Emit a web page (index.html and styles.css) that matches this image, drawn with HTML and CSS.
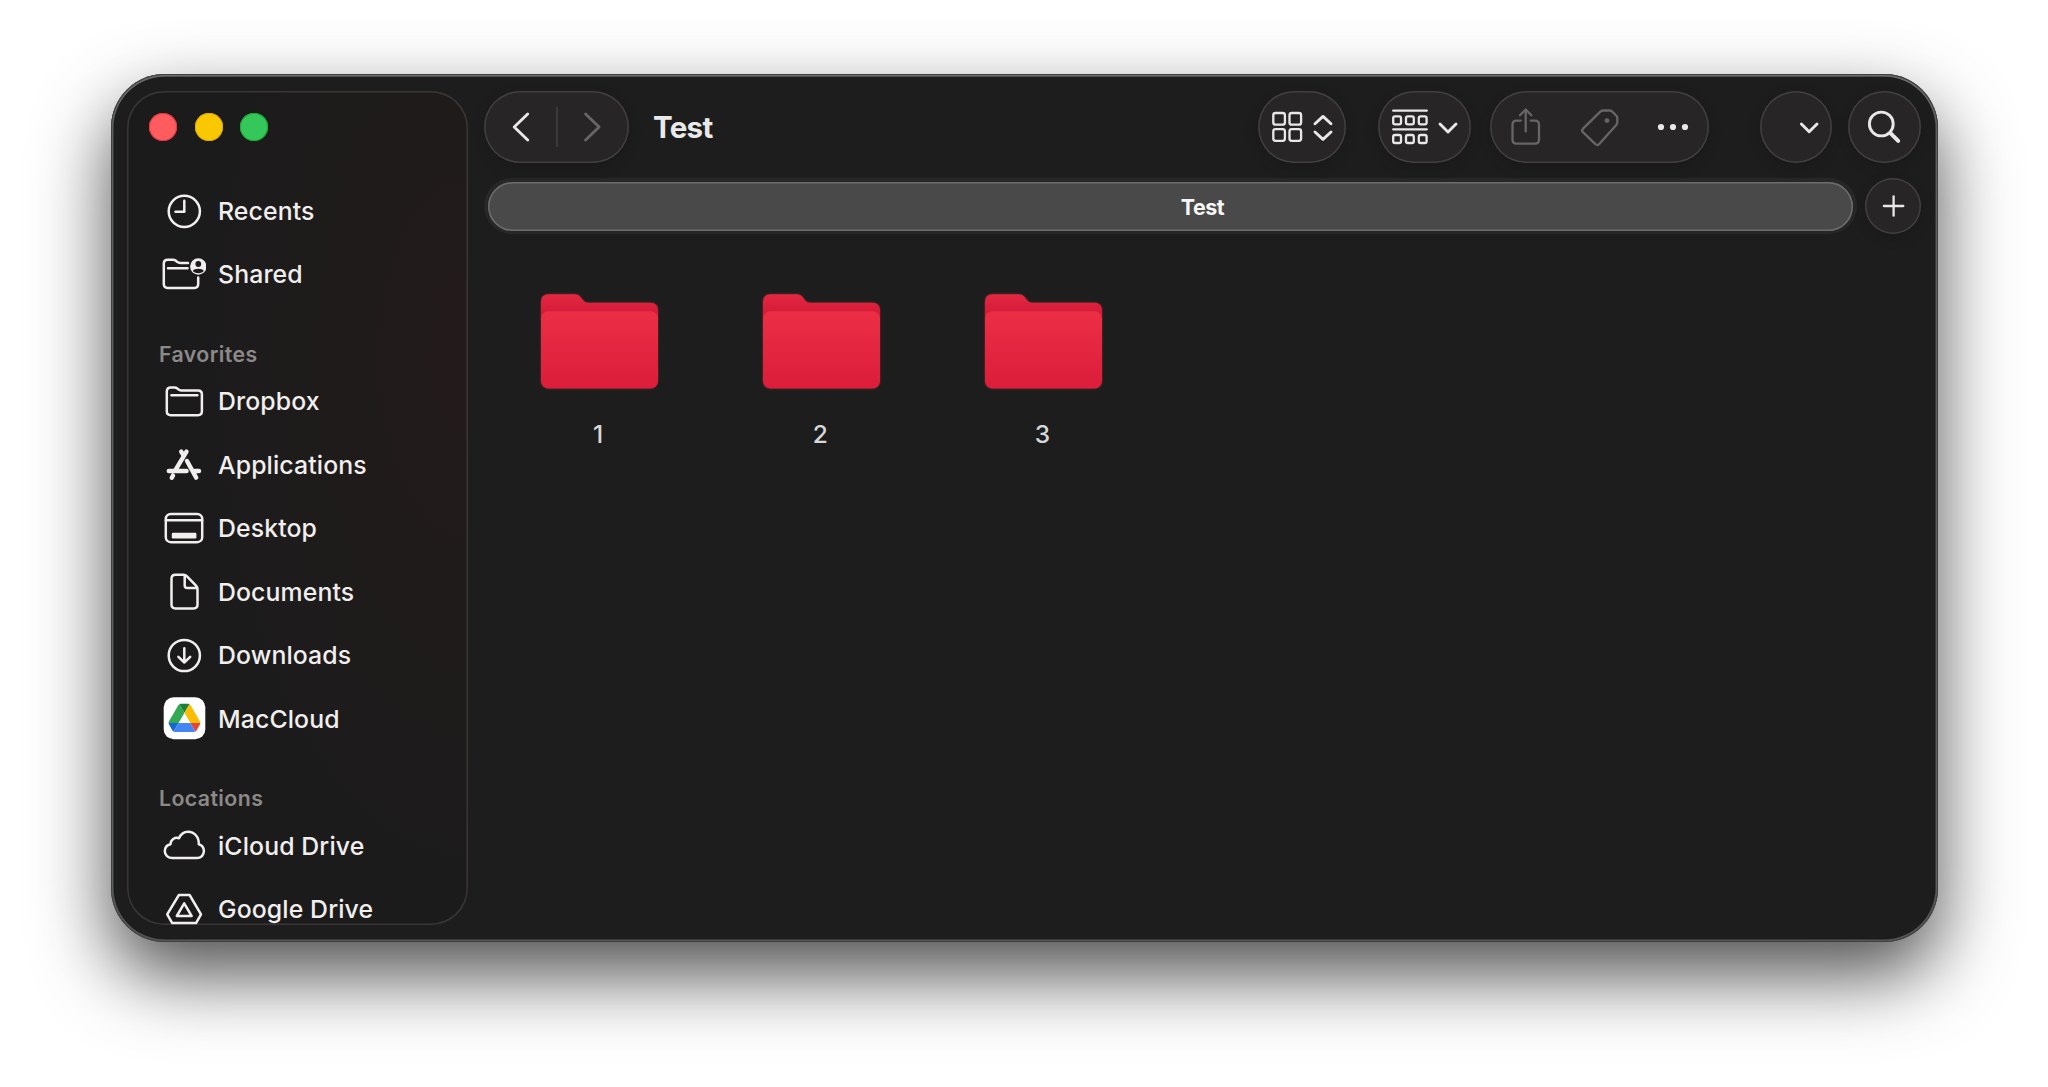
FILE: index.html
```html
<!DOCTYPE html>
<html lang="en">
<head>
<meta charset="utf-8">
<title>Test</title>
<link rel="stylesheet" href="styles.css">
</head>
<body>
<div class="window">
  <aside class="sidebar">
    <div class="lights"><span class="light close"></span><span class="light minimize"></span><span class="light zoom"></span></div>
    <nav class="list">
      <a class="row"><svg class="icon" viewBox="0 0 44 44"><circle cx="22.3" cy="22.3" r="15.6"/><path d="M22.3 11.7V22.7H13.5"/></svg><span>Recents</span></a>
      <a class="row"><svg class="icon" viewBox="0 0 44 44"><path d="M26 10.9H18.5C17 10.9 16.2 10.6 15 9.7L13.6 8.6C12.8 8 12 7.7 11 7.7H5.6Q1.8 7.7 1.8 11.5V32Q1.8 35.9 5.7 35.9H32.4Q36.2 35.9 36.2 32V25.5M6 16.2H25.6"/><circle class="solid" cx="36.3" cy="14.5" r="8.2"/><circle class="cut" cx="36.3" cy="12" r="2.9"/><path class="cut" d="M30.8 19C32 15.9 40.6 15.9 41.8 19C39 22 33.6 22 30.8 19Z"/></svg><span>Shared</span></a>
      <h2 class="heading">Favorites</h2>
      <a class="row"><svg class="icon" viewBox="0 0 44 44"><path d="M8.8 8.4H12.4C13.6 8.4 14.4 8.7 15.3 9.5L16.4 10.4C17.2 11.1 18 11.4 19.2 11.4H36Q39.9 11.4 39.9 15.2V32.3Q39.9 36.2 36 36.2H8.7Q4.8 36.2 4.8 32.3V12.3Q4.8 8.4 8.8 8.4ZM9.4 16.2H35.4"/></svg><span>Dropbox</span></a>
      <a class="row"><svg class="icon" viewBox="0 0 44 44"><path class="thick" d="M24.5 8.6L13.4 27.2M6.8 28H24.6M25 18L34.2 34.6M19.2 8.6L21.8 13M11 32.6L9.8 34.8M32.5 28H37"/></svg><span>Applications</span></a>
      <a class="row"><svg class="icon" viewBox="0 0 44 44"><rect x="3.8" y="8" width="36.4" height="28.2" rx="5"/><path d="M4 14.2H40"/><rect class="solid" x="9.8" y="26.8" width="24.6" height="5.6" rx="1.2"/></svg><span>Desktop</span></a>
      <a class="row"><svg class="icon" viewBox="0 0 44 44"><path d="M13.5 4.8H21.5Q23.6 4.8 25 6.3L34 15.6Q35.5 17.2 35.5 19.2V34.5Q35.5 38.4 31.6 38.4H13.4Q9.5 38.4 9.5 34.5V8.7Q9.5 4.8 13.5 4.8ZM22.7 5.2V15.4Q22.7 17.9 25.2 17.9H35"/></svg><span>Documents</span></a>
      <a class="row"><svg class="icon" viewBox="0 0 44 44"><circle cx="22.3" cy="22.5" r="15.6"/><path d="M22.3 15.2V29.4M16.4 23.9L22.3 29.5L28.2 23.9"/></svg><span>Downloads</span></a>
      <a class="row"><svg class="icon" viewBox="0 0 44 44"><rect x="1.7" y="0.2" width="41.6" height="42" rx="10" fill="#fff" stroke="none"/><g class="drive" transform="translate(6.6 6.7) scale(.363)"><path d="m6.6 66.85 3.85 6.65c.8 1.4 1.95 2.5 3.3 3.3l13.75-23.8h-27.5c0 1.55.4 3.1 1.2 4.5z" fill="#1967d2"/><path d="m43.65 25-13.75-23.8c-1.35.8-2.5 1.9-3.3 3.3l-25.4 44a9.06 9.06 0 0 0 -1.2 4.5h27.5z" fill="#34a853"/><path d="m73.55 76.8c1.35-.8 2.5-1.9 3.3-3.3l9.25-16c.8-1.4 1.2-2.95 1.2-4.5h-27.5z" fill="#ea4335"/><path d="m43.65 25 13.75-23.8c-1.35-.8-2.9-1.2-4.5-1.2h-18.5c-1.6 0-3.15.45-4.5 1.2z" fill="#188038"/><path d="m59.8 53h-32.3l-13.75 23.8c1.35.8 2.9 1.2 4.5 1.2h50.8c1.6 0 3.15-.45 4.5-1.2z" fill="#4285f4"/><path d="m73.4 26.5-12.7-22c-.8-1.4-1.95-2.5-3.3-3.3l-13.75 23.8 16.15 28h27.45c0-1.55-.4-3.1-1.2-4.5z" fill="#fbbc04"/></g></svg><span>MacCloud</span></a>
      <h2 class="heading">Locations</h2>
      <a class="row"><svg class="icon" viewBox="0 0 44 44"><path d="M10.5 34.1C6 34.1 2.8 31 2.8 27.2C2.8 23.7 5.2 21 8.5 20.2C8.7 15.6 12.8 12.9 17 14.2C18.8 10.3 22 7.8 26 7.8C32.4 7.8 37 13 36.8 20.2C40 21.2 41.9 23.8 41.9 27.1C41.9 31 39 34.1 35 34.1Z"/></svg><span>iCloud Drive</span></a>
      <a class="row"><svg class="icon" viewBox="0 0 44 44"><path d="M16.9 8H27.6L39 27.3L34.2 35.9H10.1L5.2 27.3ZM22.2 16.4L14.8 29H29.6Z"/></svg><span>Google Drive</span></a>
    </nav>
  </aside>
  <main class="main">
    <header class="toolbar">
      <div class="pill nav"><svg viewBox="0 0 145 72"><path d="M43.7 23L30.2 36L43.7 49"/><path class="rule" d="M73 16V56"/><path class="dim" d="M101.6 23L115.1 36L101.6 49"/></svg></div>
      <h1 class="title">Test</h1>
      <div class="pill view"><svg viewBox="0 0 88 72"><g class="thin"><rect x="15.3" y="22" width="11.6" height="11.6" rx="2.2"/><rect x="31.5" y="22" width="11.6" height="11.6" rx="2.2"/><rect x="15.3" y="38.2" width="11.6" height="11.6" rx="2.2"/><rect x="31.5" y="38.2" width="11.6" height="11.6" rx="2.2"/></g><path d="M57 32.8L65 25.4L73 32.8M57 41L65 48.4L73 41"/></svg></div>
      <div class="pill group"><svg viewBox="0 0 93 72"><g class="thin"><path d="M15.2 19.7H48.8M15.2 38.3H48.8"/><rect x="15.2" y="25.3" width="7.8" height="8" rx="1.8"/><rect x="28" y="25.3" width="7.8" height="8" rx="1.8"/><rect x="40.8" y="25.3" width="7.8" height="8" rx="1.8"/><rect x="15.2" y="44" width="7.8" height="8" rx="1.8"/><rect x="28" y="44" width="7.8" height="8" rx="1.8"/><rect x="40.8" y="44" width="7.8" height="8" rx="1.8"/></g><path d="M62 33L70 41L78 33"/></svg></div>
      <div class="pill actions"><svg viewBox="0 0 219 72"><g class="thin dim"><path d="M30.8 29.6H26.6Q22.5 29.6 22.5 33.7V48.6Q22.5 52.7 26.6 52.7H44.9Q49 52.7 49 48.6V33.7Q49 29.6 44.9 29.6H40.6M35.7 40.4V18.6M30 24.2L35.7 18.5L41.4 24.2"/><path d="M110.6 20.4Q111.6 19.5 113 19.5H119.6Q121 19.5 122 20.4L126.4 24.7Q127.3 25.7 127.3 27V31.6Q127.3 33 126.3 34L109 53.2Q107.4 55 105.7 53.3L92.9 41.2Q91.3 39.6 92.8 37.9Z"/><circle class="dot" cx="117" cy="29.6" r="2.4"/></g><circle class="dot" cx="171" cy="36" r="3.1"/><circle class="dot" cx="183" cy="36" r="3.1"/><circle class="dot" cx="195" cy="36" r="3.1"/></svg></div>
      <div class="pill more"><svg viewBox="0 0 72 72"><path d="M41.4 33L49.2 40.8L57 33"/></svg></div>
      <div class="pill search"><svg viewBox="0 0 73 72"><circle cx="33.3" cy="33" r="11.9"/><path class="handle" d="M42.4 42.1L50.2 49.9"/></svg></div>
    </header>
    <div class="tabs">
      <div class="tabbar"><div class="tab">Test</div></div>
      <div class="pill plus"><svg viewBox="0 0 56 56"><path class="thin" d="M28.6 18.3V37.7M18.9 28H38.3"/></svg></div>
    </div>
    <svg class="defs" width="0" height="0">
      <defs>
        <linearGradient id="back" x1="0" y1="0" x2="0" y2="1"><stop offset="0" stop-color="#e32841"/><stop offset=".42" stop-color="#d61c39"/><stop offset="1" stop-color="#d61c39"/></linearGradient>
        <linearGradient id="front" x1="0" y1="0" x2="0" y2="1"><stop offset="0" stop-color="#ec2e45"/><stop offset="1" stop-color="#dc1d3b"/></linearGradient>
        <symbol id="folder" viewBox="0 0 117 95"><path fill="url(#back)" d="M7.5 .3H33.5C37 .3 38.6 1.6 40.5 4.2C42.6 7.2 44.4 8.8 47.8 8.8H109.5Q117 8.8 117 16.3V40H0V7.8Q0 .3 7.5 .3Z"/><rect fill="url(#front)" y="17.2" width="117" height="77.3" rx="7.5"/></symbol>
      </defs>
    </svg>
    <section class="files">
      <figure class="file"><svg class="folder"><use href="#folder"/></svg><figcaption>1</figcaption></figure>
      <figure class="file"><svg class="folder"><use href="#folder"/></svg><figcaption>2</figcaption></figure>
      <figure class="file"><svg class="folder"><use href="#folder"/></svg><figcaption>3</figcaption></figure>
    </section>
  </main>
</div>
</body>
</html>
```
FILE: styles.css
```css
* { box-sizing: border-box; }
html, body { margin: 0; height: 100%; }
body {
  background: #fff;
  padding: 74px 110px 145px 111px;
  font-family: Inter, "Liberation Sans", sans-serif;
  color: #f1eeee;
  overflow: hidden;
}
h1, h2, figure { margin: 0; }

.window {
  height: 868px;
  display: flex;
  gap: 16px;
  padding: 17px 17px 17px 16px;
  border-radius: 54px;
  background: #1d1d1d;
  box-shadow:
    inset 0 0 0 1px #3f4141,
    inset 0 1px 0 1.5px #6a6b6b,
    inset 0 0 0 2.5px #545656,
    0 33px 74px rgba(0, 0, 0, .69);
}

.sidebar {
  width: 341px;
  height: 834px;
  border-radius: 37px;
  overflow: hidden;
  background: radial-gradient(ellipse 260px 520px at 100% 32%, #231a1b 0%, #1f1b1b 50%, #1c1b1b 100%);
  box-shadow: inset 0 0 0 1.5px #3b3636;
}
.lights { display: flex; gap: 17.5px; padding: 22px 0 0 22px; height: 88px; }
.light { width: 28px; height: 28px; border-radius: 50%; }
.close { background: #ff5c60; box-shadow: inset 0 0 0 1px #e0383f; }
.minimize { background: #fac800; box-shadow: inset 0 0 0 1px #dcae00; }
.zoom { background: #35c759; box-shadow: inset 0 0 0 1px #17ad31; }

.row {
  display: flex;
  align-items: center;
  gap: 12px;
  height: 63.5px;
  padding-left: 35px;
  font-size: 24.8px;
  font-weight: 500;
  letter-spacing: .12px;
  white-space: nowrap;
}
.heading {
  height: 63.5px;
  padding: 31.5px 0 0 32px;
  line-height: 32.5px;
  font-size: 21.3px;
  font-weight: 600;
  letter-spacing: .4px;
  color: #8c8989;
}
.icon {
  flex: none;
  width: 44px;
  height: 44px;
  fill: none;
  stroke: #f1eeee;
  stroke-width: 2.5;
  stroke-linecap: round;
  stroke-linejoin: round;
}
.solid { fill: #f1eeee; stroke: none; }
.cut { fill: #201c1b; stroke: none; }
.thick { stroke-width: 4.4; }
.drive { stroke: none; }

.main { flex: 1; display: flex; flex-direction: column; }
.toolbar { display: flex; height: 72px; align-items: center; }
.pill {
  flex: none;
  height: 72px;
  border-radius: 36px;
  background: #282526;
  box-shadow: inset 0 0 0 1.5px #423f40, 0 4px 14px rgba(0, 0, 0, .14);
}
.pill svg {
  display: block;
  width: 100%;
  height: 100%;
  fill: none;
  stroke: #e9e7e8;
  stroke-width: 2.9;
  stroke-linecap: round;
  stroke-linejoin: round;
}
.pill .thin { stroke-width: 2.3; }
.pill .dim { stroke: #676566; }
.pill .rule { stroke: #3c393a; stroke-width: 2; stroke-linecap: butt; }
.pill .dot { fill: #e9e7e8; stroke: none; }
.pill .dim .dot { fill: #676566; }
.pill .handle { stroke-width: 4; }
.nav { width: 145px; }
.title { flex: 1; padding-left: 24px; font-size: 29.5px; font-weight: 700; line-height: 40px; color: #e9e9e9; letter-spacing: -.7px; }
.view { width: 88px; }
.group { width: 93px; margin-left: 32px; }
.actions { width: 219px; margin-left: 19px; }
.more { width: 72px; margin-left: 51px; }
.search { width: 73px; margin-left: 16px; }

.tabs { display: flex; gap: 8px; margin-top: 15px; }
.tabbar { flex: 1; height: 56px; padding: 4px; border-radius: 28px; background: #272727; }
.tab {
  height: 49px;
  padding-left: 64px;
  border-radius: 24.5px;
  background: #494949;
  box-shadow: inset 0 0 0 1.5px #6c6c6c;
  line-height: 50px;
  text-align: center;
  font-size: 21.4px;
  font-weight: 650;
  letter-spacing: -.4px;
  color: #f6f6f6;
}
.plus { width: 56px; height: 56px; border-radius: 50%; }

.defs { position: absolute; }
.files { display: flex; gap: 105.2px; padding: 60px 0 0 57px; }
.file { width: 117px; }
.folder { display: block; width: 117px; height: 95px; filter: drop-shadow(0 0 1px rgba(220, 60, 60, .5)); }
.file figcaption {
  margin-top: 29px;
  padding-right: 3px;
  line-height: 32px;
  text-align: center;
  font-size: 24.5px;
  font-weight: 500;
  color: #d8d8d8;
}
```
